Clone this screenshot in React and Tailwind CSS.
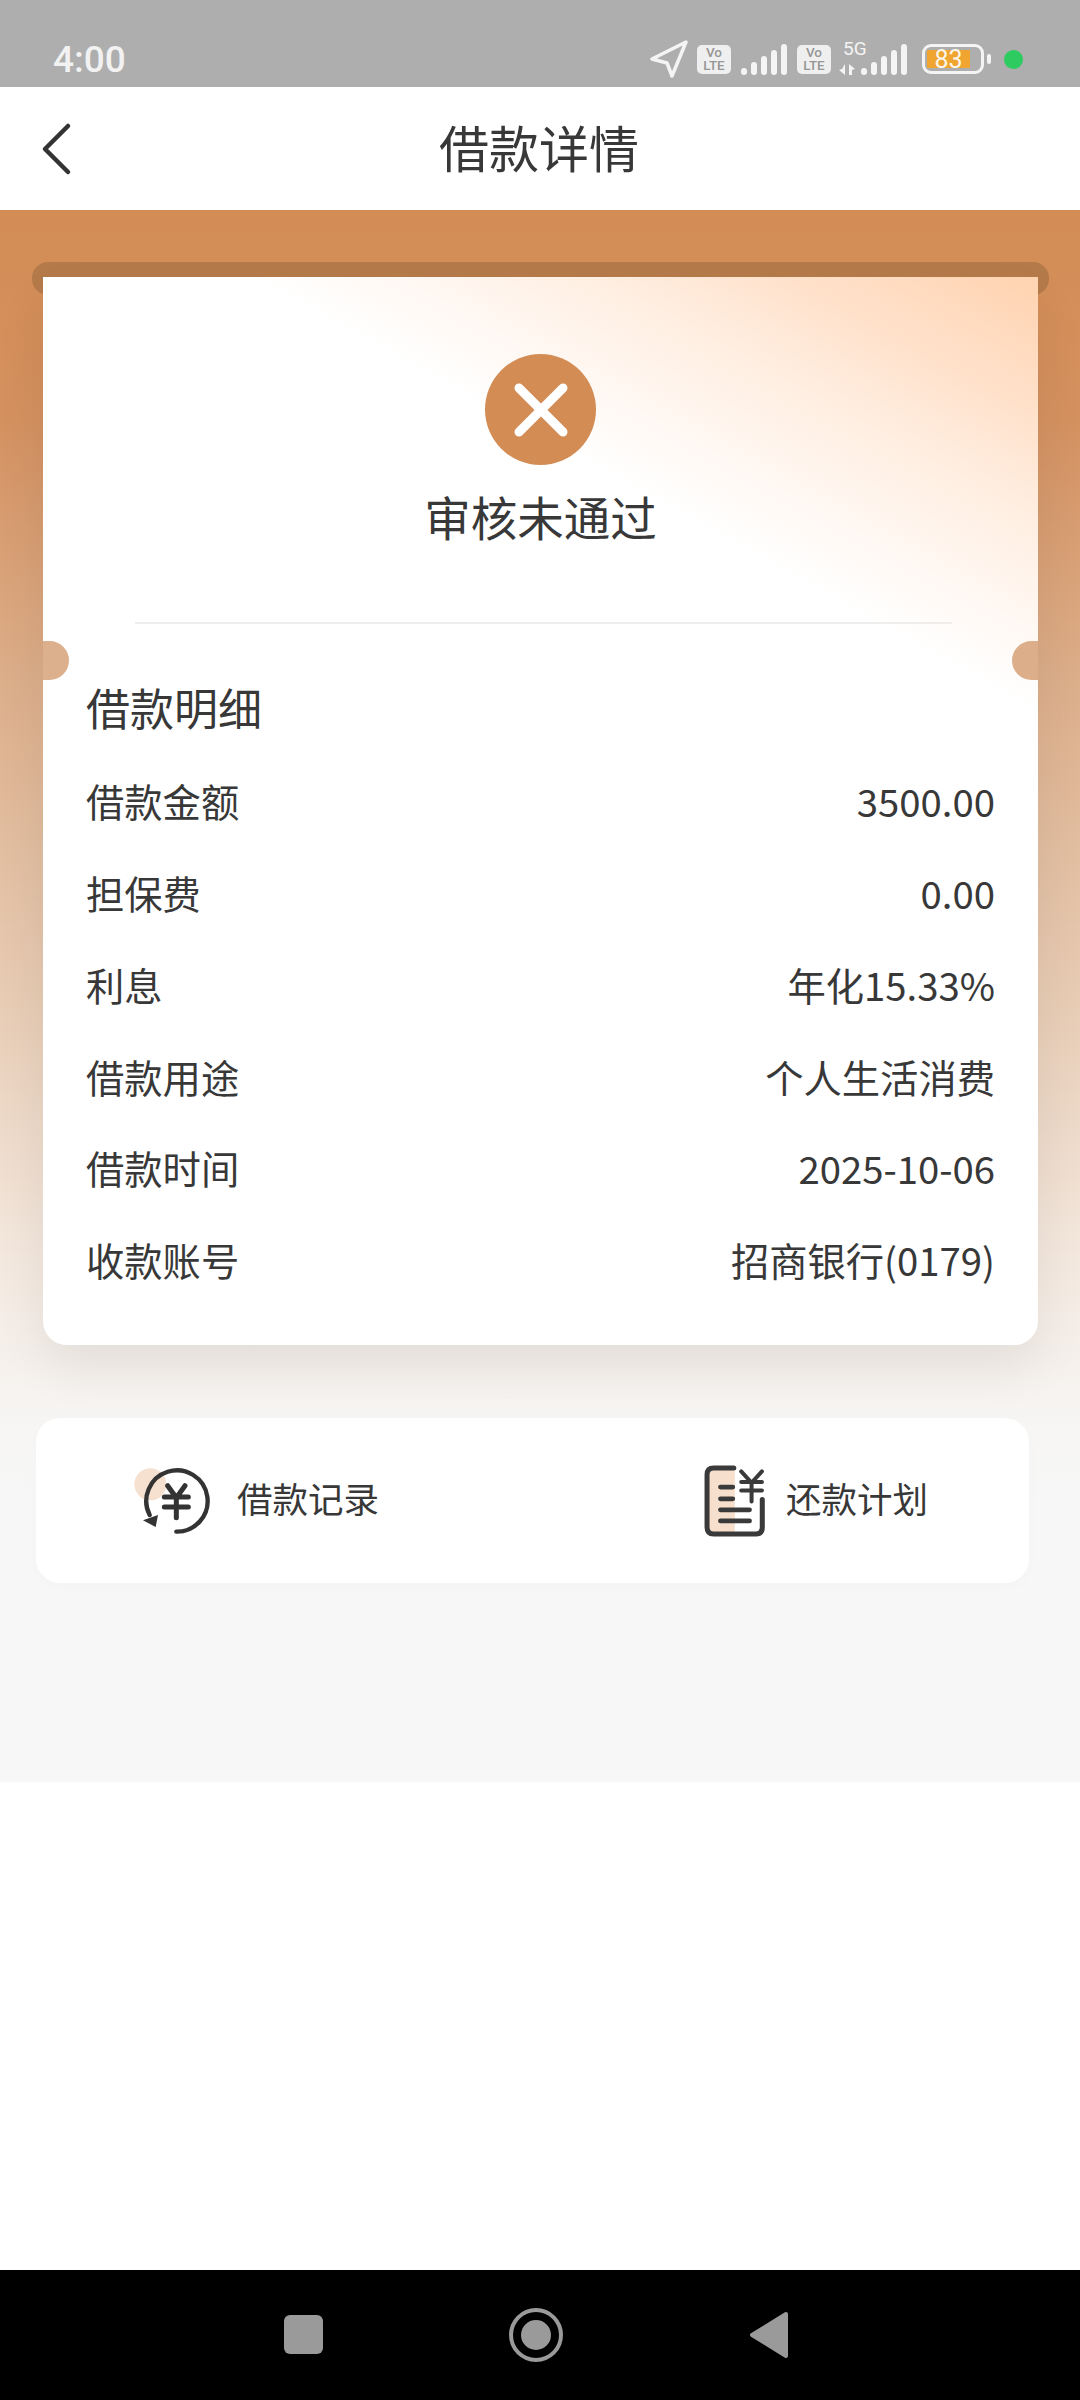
import React from 'react';

const rows = [
  ['借款金额', '3500.00'],
  ['担保费', '0.00'],
  ['利息', '年化15.33%'],
  ['借款用途', '个人生活消费'],
  ['借款时间', '2025-10-06'],
  ['收款账号', '招商银行(0179)'],
];

function Signal() {
  return (
    <div className="flex items-end gap-[4px] h-[31px]">
      {[7, 13, 19, 25, 31].map((h, i) => (
        <div key={i} className="w-[6px] rounded-[3px] bg-[#f4f4f4]" style={{ height: h }} />
      ))}
    </div>
  );
}

function VoLte() {
  return (
    <div className="w-[34px] h-[29px] rounded-[5px] bg-[#efefef] flex flex-col items-center justify-center text-[#969696] text-[13.5px] leading-[13px] font-medium font-['Roboto',sans-serif]">
      <span>Vo</span>
      <span>LTE</span>
    </div>
  );
}

function StatusBar() {
  return (
    <div className="h-[87px] bg-[#aeaeae] flex items-center justify-between pl-[53px] pr-[57px] pt-[31px]">
      <span className="text-[37px] leading-none font-medium text-[#f2f2f2] font-['Roboto',sans-serif]">4:00</span>
      <div className="flex items-center">
        <svg width="38" height="38" viewBox="0 0 38 38" fill="none" stroke="#f4f4f4" strokeWidth="3.5" strokeLinejoin="round">
          <path d="M36 2 L2 19 L17 23 L22 36 Z" />
        </svg>
        <div className="ml-[9px]"><VoLte /></div>
        <div className="ml-[10px]"><Signal /></div>
        <div className="ml-[10px]"><VoLte /></div>
        <div className="ml-[8px] w-[68px] relative h-[31px] flex justify-end">
          <span className="absolute left-[4px] -top-[5px] text-[19px] leading-none text-[#f4f4f4] font-['Roboto',sans-serif]">5G</span>
          <svg className="absolute left-0 bottom-0" width="18" height="11" viewBox="0 0 18 11" fill="#f4f4f4">
            <path d="M6 0 V11 L0 6 L3 5 Z M10 0 L16 5 L13 6 V11 H10 Z" />
          </svg>
          <Signal />
        </div>
        <div className="ml-[15px] w-[62px] h-[30px] rounded-[9px] border-[3px] border-[#f4f4f4] py-[3px] px-[2px]">
          <div className="w-[43px] h-full bg-[#f0a530] flex items-center justify-center text-[25px] leading-none text-[#fdf6e8] font-['Roboto',sans-serif]">83</div>
        </div>
        <div className="ml-[3px] w-[4px] h-[10px] rounded-[2px] bg-[#f4f4f4]" />
        <div className="ml-[13px] w-[19px] h-[19px] rounded-full bg-[#2ecc60]" />
      </div>
    </div>
  );
}

function Header() {
  return (
    <div className="relative h-[123px] bg-white flex items-center justify-center">
      <svg className="absolute left-[40px] top-[33px]" width="34" height="58" viewBox="0 0 34 58" fill="none" stroke="#333" strokeWidth="4.5" strokeLinecap="round" strokeLinejoin="round">
        <path d="M28 6 L5 29 L28 52" />
      </svg>
      <h1 className="text-[50px] leading-none text-[#383838] pb-[5px] pr-[2px]">借款详情</h1>
    </div>
  );
}

function RecordIcon() {
  return (
    <svg width="80" height="80" viewBox="40 60 240 240" fill="none" stroke="#333" strokeWidth="13" strokeLinecap="round" strokeLinejoin="round">
      <circle cx="92" cy="130" r="48" fill="#f6e0cf" stroke="none" />
      <path d="M170 272 A92 92 0 1 0 90 222" />
      <path d="M70 238 L115 222 L108 258 Z" fill="#333" stroke="none" />
      <path d="M144 134 L170 170 L196 134 M134 168 H206 M134 198 H206 M170 170 V230" strokeWidth="15" />
    </svg>
  );
}

function PlanIcon() {
  return (
    <svg width="67" height="77" viewBox="70 60 200 230" fill="none" stroke="#3a3a3a" strokeWidth="15" strokeLinecap="round" strokeLinejoin="round">
      <rect x="90" y="84" width="78" height="186" fill="#f6dfcd" stroke="none" />
      <path d="M165 78 H105 Q85 78 85 98 V255 Q85 275 105 275 H230 Q250 275 250 255 V172" />
      <path d="M125 135 H162 M125 170 H162 M125 203 H212 M125 236 H212" strokeWidth="14" />
      <path d="M187 88 L218 122 L249 88 M187 120 H249 M187 145 H249 M218 122 V178" strokeWidth="12" />
    </svg>
  );
}

export default function App() {
  return (
    <div className="w-[1080px] h-[2400px] flex flex-col bg-white overflow-hidden font-['Noto_Sans_CJK_SC','Noto_Sans',sans-serif]">
      <StatusBar />
      <Header />

      <div className="h-[1572px] pt-[52px] bg-[linear-gradient(180deg,#d38c54_0px,#d49160_210px,#dcae8a_470px,#e8cdb6_800px,#f3e7dd_1040px,#f7f6f5_1220px,#f7f7f7_1300px)]">
        {/* ticket slot behind the card */}
        <div className="mx-[32px] w-[1017px] h-[33px] rounded-[16px] bg-[#b57a4a]" />

        <div className="relative mx-[43px] -mt-[18px] w-[995px] h-[1068px] rounded-b-[24px] bg-[linear-gradient(29deg,#ffffff_73%,#fff8f3_78%,#ffeee1_85%,#ffe0c9_92%,#ffd3b0_100%)] shadow-[0_24px_50px_rgba(0,0,0,0.07)]">
          <div className="absolute left-0 top-[364px] w-[26px] h-[39px] rounded-r-[20px] bg-[#dcb08d]" />
          <div className="absolute right-0 top-[364px] w-[26px] h-[39px] rounded-l-[20px] bg-[#dcae8a]" />

          <div className="flex flex-col items-center pt-[77px]">
            <div className="w-[111px] h-[111px] rounded-full bg-[#d38c54] flex items-center justify-center">
              <svg width="56" height="56" viewBox="0 0 56 56" fill="none" stroke="#fff" strokeWidth="9" strokeLinecap="round">
                <path d="M6 6 L50 50 M50 6 L6 50" />
              </svg>
            </div>
            <p className="mt-[21px] text-[46.5px] leading-[60px] text-[#383838]">审核未通过</p>
          </div>

          <div className="ml-[92px] mr-[86px] mt-[76px] h-[2px] bg-[#f0eeed]" />

          <div className="px-[43px] pt-[53px]">
            <h2 className="text-[44px] leading-[60px] text-[#383838]">借款明细</h2>
            <div className="mt-[18px]">
              {rows.map(([label, value]) => (
                <div key={label} className="h-[91.8px] flex items-center justify-between text-[38.3px] text-[#383838]">
                  <span>{label}</span>
                  <span>{value}</span>
                </div>
              ))}
            </div>
          </div>
        </div>

        <div className="mx-[36px] mt-[73px] w-[993px] h-[165px] rounded-[24px] bg-white shadow-[0_4px_16px_rgba(0,0,0,0.015)] flex items-center justify-between pl-[97px] pr-[101px] text-[35.5px] text-[#383838]">
          <div className="flex items-center gap-[24px]">
            <RecordIcon />
            <span className="pb-[5px]">借款记录</span>
          </div>
          <div className="flex items-center gap-[17px]">
            <PlanIcon />
            <span className="pb-[5px]">还款计划</span>
          </div>
        </div>
      </div>

      <div className="flex-1 bg-white" />

      <div className="h-[130px] bg-black relative">
        <div className="absolute left-[284px] top-[45px] w-[39px] h-[39px] rounded-[6px] bg-[#9a9a9a]" />
        <div className="absolute left-[509px] top-[38px] w-[54px] h-[54px] rounded-full border-[4px] border-[#9a9a9a] flex items-center justify-center">
          <div className="w-[30px] h-[30px] rounded-full bg-[#9a9a9a]" />
        </div>
        <svg className="absolute left-[749px] top-[41px]" width="40" height="48" viewBox="0 0 40 48" fill="#9a9a9a" stroke="#9a9a9a" strokeWidth="4" strokeLinejoin="round">
          <path d="M37 3 L3 24 L37 45 Z" />
        </svg>
      </div>
    </div>
  );
}
